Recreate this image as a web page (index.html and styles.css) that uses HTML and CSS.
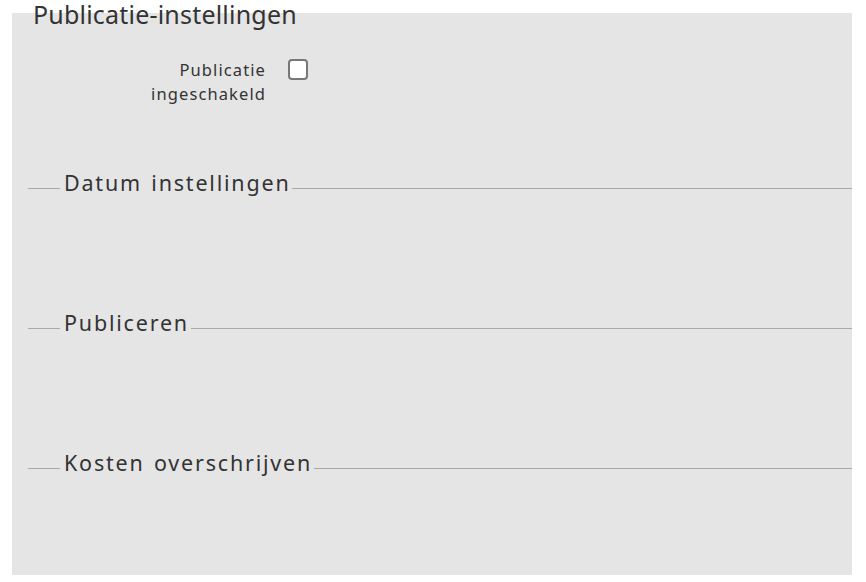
FILE: index.html
```html
<!DOCTYPE html>
<html lang="nl">
<head>
<meta charset="utf-8">
<title>Publicatie-instellingen</title>
<link rel="stylesheet" href="styles.css">
</head>
<body>
<div class="panel">
  <div class="legend">Publicatie-instellingen</div>
  <div class="field-row">
    <label class="field-label" for="pub">Publicatie<br>ingeschakeld</label>
    <input type="checkbox" id="pub" class="checkbox">
  </div>
  <div class="section first">
    <div class="section-head"><span class="rule short"></span><span class="section-title">Datum instellingen</span><span class="rule long"></span></div>
  </div>
  <div class="section">
    <div class="section-head"><span class="rule short"></span><span class="section-title">Publiceren</span><span class="rule long"></span></div>
  </div>
  <div class="section">
    <div class="section-head"><span class="rule short"></span><span class="section-title">Kosten overschrijven</span><span class="rule long"></span></div>
  </div>
</div>
</body>
</html>
```

FILE: styles.css
```css
html, body {
  margin: 0;
  padding: 0;
  background: #ffffff;
}
body {
  font-family: "Noto Sans", "DejaVu Sans", sans-serif;
  color: #333333;
}
.panel {
  display: flow-root;
  margin: 13px 0 0 12px;
  width: 840px;
  height: 562px;
  background: #e5e5e5;
  overflow: visible;
}
.legend {
  margin-top: -13px;
  padding-left: 21px;
  font-size: 25px;
  letter-spacing: 0.2px;
  line-height: 28px;
  color: #333333;
}
.field-row {
  display: flex;
  align-items: flex-start;
  margin-top: 30px;
  gap: 22px;
}
.field-label {
  width: 254px;
  text-align: right;
  font-size: 16.5px;
  letter-spacing: 1.1px;
  line-height: 24px;
}
.checkbox {
  appearance: none;
  -webkit-appearance: none;
  margin: 1px 0 0 0;
  width: 20px;
  height: 21px;
  box-sizing: border-box;
  border: 2px solid #777777;
  border-radius: 4px;
  background: #ffffff;
}
.section {
  height: 140px;
}
.section.first {
  margin-top: 63px;
}
.section-head {
  display: flex;
  align-items: center;
  padding-left: 16px;
  height: 28px;
  gap: 4px;
}
.section-title {
  font-size: 21.5px;
  letter-spacing: 1.8px;
  word-spacing: 2px;
  line-height: 28px;
  white-space: nowrap;
  margin-right: -2px;
}
.rule {
  height: 1px;
  background: #a8a8a8;
  margin-top: 10px;
}
.rule.short {
  width: 32px;
}
.rule.long {
  flex: 1;
}
```
